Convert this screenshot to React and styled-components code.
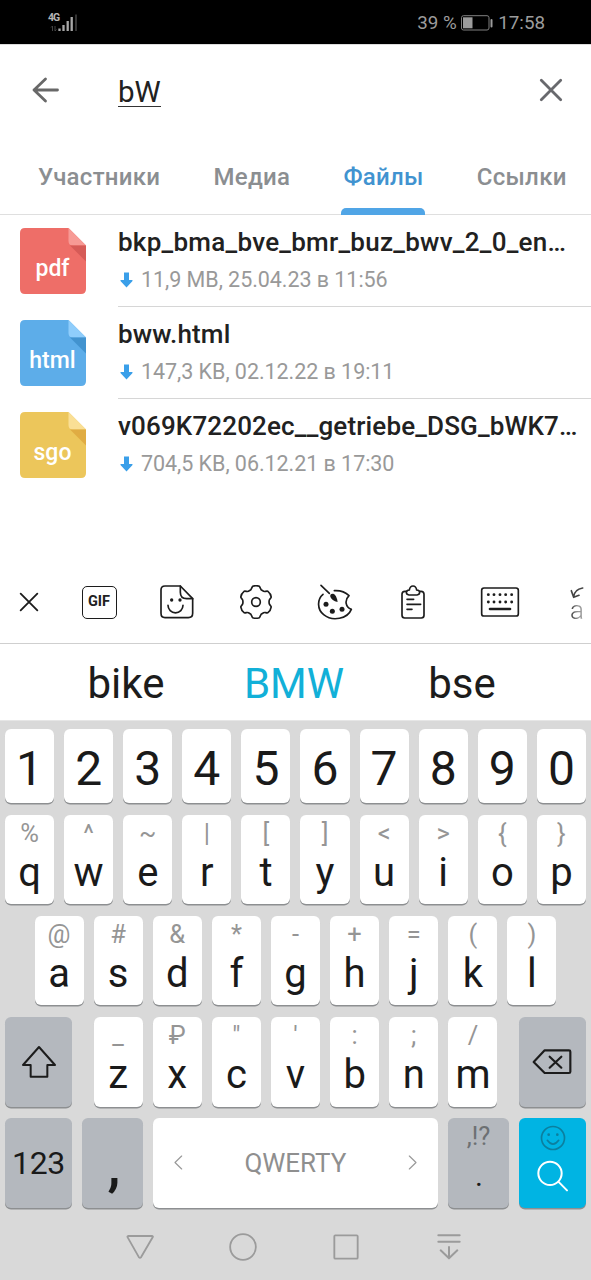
import React from 'react';
import styled, { createGlobalStyle } from 'styled-components';

const GlobalStyle = createGlobalStyle`
  * { box-sizing: border-box; }
  body { margin: 0; background: #fff; }
`;

const Screen = styled.div`
  display: flex;
  flex-direction: column;
  width: 591px;
  height: 1280px;
  overflow: hidden;
  background: #fff;
  font-family: Roboto, 'Noto Sans', sans-serif;
  color: #212121;
`;

const Icon = styled.svg`
  display: block;
  flex: none;
  fill: none;
  stroke: ${(p) => p.$color || '#1c1c1c'};
  stroke-width: ${(p) => p.$weight || 4};
  stroke-linecap: round;
  stroke-linejoin: round;
`;

/* ---------- status bar ---------- */

const StatusBar = styled.div`
  display: flex;
  align-items: center;
  height: 44px;
  flex: none;
  padding: 1px 46px 0 48px;
  background: #000;
  color: #9c9c9c;
  font-size: 18.8px;
  line-height: 22px;
`;

const Signal = styled.div`
  display: flex;
  margin-right: auto;
`;

const Network = styled.div`
  width: 10px;
  font-size: 10.5px;
  font-weight: 700;
  line-height: 8px;
  letter-spacing: -0.9px;
  color: #b5b5b5;
`;

const StatusText = styled.span`
  white-space: nowrap;
`;

const Battery = styled.div`
  margin: 0 5px 0 4.5px;
`;

/* ---------- search header ---------- */

const Header = styled.header`
  display: flex;
  align-items: center;
  flex: none;
  height: 92px;
  padding: 0 28px 1.5px 31.5px;
  border-top: 1px solid #dcdcdc;
`;

const Query = styled.div`
  flex: 1;
  margin-left: 59.5px;
  padding-top: 4px;
`;

const QueryText = styled.span`
  display: inline-block;
  font-size: 29.5px;
  line-height: 28px;
  padding-top: 1px;
  height: 29.5px;
  border-bottom: 1.5px solid #333;
`;

const Tabs = styled.nav`
  display: flex;
  gap: 53.2px;
  flex: none;
  height: 79px;
  padding-left: 38px;
  border-bottom: 1px solid #dfdfdf;
`;

const Tab = styled.div`
  position: relative;
  height: 79px;
  padding-top: 28px;
  font-size: 24px;
  font-weight: 500;
  line-height: 26px;
  letter-spacing: 0.28px;
  white-space: nowrap;
  color: ${(p) => (p.$active ? '#4193d0' : '#8b8e91')};
`;

const Indicator = styled.div`
  position: absolute;
  left: -2px;
  right: -1.5px;
  bottom: 0;
  height: 7px;
  border-radius: 5px 5px 0 0;
  background: #50a5e6;
`;

/* ---------- files ---------- */

const Files = styled.main`
  flex: none;
  height: 347px;
`;

const FileRow = styled.div`
  display: flex;
  height: 92px;
  padding-left: 19.5px;
`;

const Badge = styled.div`
  position: relative;
  width: 66px;
  height: 66px;
  margin: 13px 32.5px 0 0;
  flex: none;
`;

const BadgeLabel = styled.div`
  position: absolute;
  inset: 27px 0 auto 0;
  text-align: center;
  font-size: 23px;
  font-weight: 500;
  line-height: 27px;
  color: #fff;
`;

const FileInfo = styled.div`
  flex: 1;
  border-bottom: ${(p) => (p.$last ? 'none' : '1px solid #d6d6d6')};
`;

const FileName = styled.div`
  padding-top: 13px;
  font-size: 26px;
  font-weight: 500;
  line-height: 29px;
  white-space: nowrap;
  letter-spacing: ${(p) => p.$spacing || 0}px;
`;

const FileMeta = styled.div`
  display: flex;
  align-items: center;
  gap: 8px;
  padding: 10px 0 0 2px;
  font-size: 21.5px;
  line-height: 26px;
  letter-spacing: -0.05px;
  white-space: nowrap;
  color: #999;
`;

/* ---------- keyboard toolbar ---------- */

const Toolbar = styled.div`
  display: grid;
  grid-template-columns: 58px 82px 74px 83px 75px 82px 92px 45px;
  align-items: center;
  justify-items: center;
  flex: none;
  height: 82px;
  padding-bottom: 1px;
  border-bottom: 1px solid #cfcfcf;
`;

const GifBox = styled.div`
  width: 35px;
  height: 33px;
  border: 1.6px solid #1c1c1c;
  border-radius: 5px;
  text-align: center;
  font-size: 14.5px;
  font-weight: 700;
  line-height: 30px;
`;

const Convert = styled.div`
  display: flex;
  flex-direction: column;
  justify-self: start;
  gap: 1px;
  margin-left: 24px;
  padding-top: 2px;
  font-size: 26px;
  font-weight: 300;
  line-height: 20px;
  color: transparent;
  background: linear-gradient(90deg, #444 10%, #999 60%);
  background-clip: text;
`;

const Suggestions = styled.div`
  display: grid;
  grid-template-columns: repeat(3, 168px);
  justify-content: center;
  align-items: center;
  flex: none;
  height: 76px;
  padding: 3px 3px 0 0;
  font-size: 42px;
`;

const Suggestion = styled.div`
  text-align: center;
  color: ${(p) => (p.$primary ? '#12b0d8' : '#1c1c1c')};
`;

/* ---------- keyboard ---------- */

const Keyboard = styled.div`
  display: flex;
  flex-direction: column;
  gap: 11.6px;
  flex: none;
  height: 490px;
  padding-top: 8px;
  background: #d9d9d9;
  border-top: 1px solid #e6e6e6;
`;

const KeyRow = styled.div`
  display: flex;
  gap: 10px;
  flex: none;
  height: ${(p) => p.$height || 89.6}px;
  padding: 0 ${(p) => p.$inset || 5}px;
`;

const keyColors = { light: '#fff', dark: '#b4b8be', accent: '#00b4e3' };

const Key = styled.div`
  display: flex;
  flex-direction: column;
  align-items: center;
  justify-content: ${(p) => (p.$center ? 'center' : 'flex-start')};
  flex: ${(p) => (p.$width ? `0 0 ${p.$width}px` : '1 1 0')};
  min-width: 0;
  margin-left: ${(p) => p.$before || 0}px;
  margin-right: ${(p) => p.$after || 0}px;
  border-radius: 6px;
  background: ${(p) => keyColors[p.$tone || 'light']};
  box-shadow: 0 1.5px 0 #8d8f91;
  color: #1a1a1a;
`;

const Digit = styled.span`
  padding-top: 6px;
  font-size: 48px;
  line-height: 56px;
`;

const Hint = styled.span`
  height: 36px;
  font-size: 25.5px;
  line-height: 37px;
  color: ${(p) => (p.$dark ? '#6d7073' : '#959595')};
`;

const Letter = styled.span`
  font-size: 40px;
  line-height: 43px;
`;

const ModeLabel = styled.span`
  font-size: 32px;
  line-height: 36px;
  letter-spacing: -0.4px;
`;

const Comma = styled.span`
  font-size: 58px;
  font-weight: 500;
  line-height: 84px;
  padding-top: 5px;
  padding-left: 3px;
`;

const Period = styled.span`
  padding-left: 1px;
  font-size: 30px;
  line-height: 43px;
`;

const SpaceContent = styled.div`
  display: flex;
  align-items: center;
  justify-content: space-between;
  width: 100%;
  padding: 0 21px;
  font-size: 26px;
  color: #8f8f8f;
`;

const SearchIcons = styled.div`
  display: flex;
  flex-direction: column;
  align-items: center;
  gap: 9px;
  padding-top: 7px;
`;

const NavBar = styled.div`
  display: grid;
  grid-template-columns: repeat(4, 103px);
  align-items: center;
  justify-items: center;
  flex: none;
  height: 70px;
  padding: 4px 0 0 88px;
  background: #d9d9d9;
`;

const files = [
  { ext: 'pdf', name: 'bkp_bma_bve_bmr_buz_bwv_2_0_en…', spacing: 0.26, meta: '11,9 MB, 25.04.23 в 11:56', color: '#ee6e68', fold: '#f79a95', shade: '#d65b57' },
  { ext: 'html', name: 'bww.html', spacing: 0.15, meta: '147,3 KB, 02.12.22 в 19:11', color: '#5dade9', fold: '#8fcdfb', shade: '#4293cf' },
  { ext: 'sgo', name: 'v069K72202ec__getriebe_DSG_bWK7…', spacing: 0.15, meta: '704,5 KB, 06.12.21 в 17:30', color: '#ecc65b', fold: '#fadf95', shade: '#e0ac43' },
];

const digits = [...'1234567890'];
const topRow = [['%', 'q'], ['^', 'w'], ['~', 'e'], ['|', 'r'], ['[', 't'], [']', 'y'], ['<', 'u'], ['>', 'i'], ['{', 'o'], ['}', 'p']];
const homeRow = [['@', 'a'], ['#', 's'], ['&', 'd'], ['*', 'f'], ['-', 'g'], ['+', 'h'], ['=', 'j'], ['(', 'k'], [')', 'l']];
const bottomRow = [['_', 'z'], ['₽', 'x'], ['"', 'c'], ["'", 'v'], [':', 'b'], [';', 'n'], ['/', 'm']];

function gearPath() {
  const pt = (r, deg) => {
    const a = (deg * Math.PI) / 180;
    return `${(r * Math.cos(a)).toFixed(1)} ${(r * Math.sin(a)).toFixed(1)}`;
  };
  let d = `M${pt(48, -102)}`;
  for (let i = 0; i < 6; i += 1) {
    const a = -90 + i * 60;
    d += `Q${pt(51, a)} ${pt(48, a + 12)}`;
    d += `C${pt(45, a + 19)} ${pt(38, a + 18)} ${pt(39.5, a + 30)}`;
    d += `C${pt(38, a + 42)} ${pt(45, a + 41)} ${pt(48, a + 48)}`;
  }
  return `${d}Z`;
}

function LetterKey({ pair }) {
  return (
    <Key>
      <Hint>{pair[0]}</Hint>
      <Letter>{pair[1]}</Letter>
    </Key>
  );
}

function FileItem({ file, last }) {
  return (
    <FileRow>
      <Badge>
        <svg width="66" height="66" viewBox="0 0 66 66">
          <path d="M5 0H48.500L66 17.500V61Q66 66 61 66H5Q0 66 0 61V5Q0 0 5 0Z" fill={file.color} />
          <path d="M48.500 0L66 17.500H53Q48.500 17.500 48.500 13Z" fill={file.fold} />
          <path d="M50 17.500H66V33.500Z" fill={file.shade} />
        </svg>
        <BadgeLabel>{file.ext}</BadgeLabel>
      </Badge>
      <FileInfo $last={last}>
        <FileName $spacing={file.spacing}>{file.name}</FileName>
        <FileMeta>
          <svg width="13" height="16" viewBox="0 0 13 16">
            <path d="M4 0.500H9V8H12.200Q13 8.500 12.300 9.300L6.500 15.500L0.700 9.300Q0 8.500 0.800 8H4Z" fill="#3a9fe9" />
          </svg>
          {file.meta}
        </FileMeta>
      </FileInfo>
    </FileRow>
  );
}

export default function App() {
  return (
    <Screen>
      <GlobalStyle />
      <StatusBar>
        <Signal>
          <Network>4G</Network>
          <svg width="28" height="18" viewBox="0 0 28 18" style={{ marginLeft: -9 }}>
            <path d="M3.500 17V12M2 13.500L3.500 12M6 12V17L7.500 15.500" fill="none" stroke="#444" strokeWidth="1" />
            <path d="M10.500 14.500V17M14.500 11V17M18.700 7V17M22.700 3V17" stroke="#a8a8a8" strokeWidth="2.300" />
            <path d="M27 0.500V17" stroke="#333" strokeWidth="2" />
          </svg>
        </Signal>
        <StatusText>39 %</StatusText>
        <Battery>
          <svg width="32" height="16" viewBox="0 0 32 16" style={{ display: 'block' }}>
            <rect x="0.500" y="0.700" width="27.500" height="14.300" rx="2" fill="none" stroke="#808080" strokeWidth="1" />
            <rect x="2" y="2.300" width="9.500" height="11" fill="#9c9c9c" />
            <rect x="29.500" y="4" width="2" height="8.500" rx="1" fill="#9c9c9c" />
          </svg>
        </Battery>
        <StatusText>17:58</StatusText>
      </StatusBar>

      <Header>
        <Icon width="27" height="26" viewBox="0 0 27 26" $color="#686868" $weight={2.8}>
          <path d="M25.500 13H2M13.500 2L2 13L13.500 24" />
        </Icon>
        <Query>
          <QueryText>bW</QueryText>
        </Query>
        <Icon width="24" height="24" viewBox="0 0 24 24" $color="#68696d" $weight={2.8}>
          <path d="M2.300 2.300L21.700 21.700M21.700 2.300L2.300 21.700" />
        </Icon>
      </Header>

      <Tabs>
        <Tab>Участники</Tab>
        <Tab>Медиа</Tab>
        <Tab $active>
          Файлы
          <Indicator />
        </Tab>
        <Tab>Ссылки</Tab>
      </Tabs>

      <Files>
        {files.map((f, i) => (
          <FileItem key={f.ext} file={f} last={i === files.length - 1} />
        ))}
      </Files>

      <Toolbar>
        <Icon width="20" height="20" viewBox="0 0 60 60" $weight={5.5}>
          <path d="M5 5L55 55M55 5L5 55" />
        </Icon>
        <GifBox>GIF</GifBox>
        <Icon width="34" height="34" viewBox="482 46 102 102" $weight={5}>
          <path d="M497 49H543L580 87V131Q580 144 567 144H497Q485 144 485 131V61Q485 49 497 49Z" />
          <path d="M543 49V68Q543 87 562 87H580" />
          <path d="M506 107A22.500 22.500 0 0 0 551 107" />
          <g fill="#1c1c1c" stroke="none">
            <circle cx="517" cy="91" r="5" />
            <circle cx="542" cy="91" r="5" />
          </g>
        </Icon>
        <Icon width="34" height="34" viewBox="-51 -51 102 102" $weight={5}>
          <path d={gearPath()} />
          <circle r="13" />
        </Icon>
        <Icon width="36" height="36" viewBox="78 42 108 108" $weight={5}>
          <path d="M96 73C78 88 78 118 98 134C125 156 170 146 181 118C163 111 160 91 174 77C162 65 147 61 130 62" />
          <path d="M90 46L115 70" />
          <g fill="#1c1c1c" stroke="none">
            <path d="M118 80Q116 70 127 71Q137 75 140 96Q122 92 118 80Z" />
            <circle cx="105" cy="103" r="7.500" />
            <circle cx="124" cy="124" r="7.500" />
            <circle cx="153" cy="118" r="7.500" />
          </g>
        </Icon>
        <Icon width="26" height="36" viewBox="329 43 78 108" $weight={5}>
          <path d="M349 65H344Q335 65 335 74V137Q335 145 343 145H393Q401 145 401 137V74Q401 65 392 65H388" />
          <path d="M356 76Q348 75 348 68Q348 62 357 61Q359 49 368 49Q377 49 379 61Q388 62 388 68Q388 75 380 76Z" />
          <path d="M350 89H370M350 104H391M350 119H365" />
        </Icon>
        <Icon width="40" height="32" viewBox="569 49 120 96" $weight={5}>
          <rect x="574" y="55" width="110" height="84" rx="7" />
          <path d="M599 118H659" strokeWidth="8" />
          <g fill="#1c1c1c" stroke="none">
            {[594, 611, 629, 646, 664].map((x) => (
              <g key={x}>
                <circle cx={x} cy="75" r="4.300" />
                <circle cx={x} cy="97" r="4.300" />
              </g>
            ))}
          </g>
        </Icon>
        <Convert>
          <Icon width="14" height="12" viewBox="837 50 42 36" $color="#444" $weight={5}>
            <path d="M875 53Q850 57 848 80M841 61L848 81L864 75" />
          </Icon>
          a
        </Convert>
      </Toolbar>

      <Suggestions>
        <Suggestion>bike</Suggestion>
        <Suggestion $primary>BMW</Suggestion>
        <Suggestion>bse</Suggestion>
      </Suggestions>

      <Keyboard>
        <KeyRow $height={74}>
          {digits.map((d) => (
            <Key key={d} $center>
              <Digit>{d}</Digit>
            </Key>
          ))}
        </KeyRow>
        <KeyRow>
          {topRow.map((p) => <LetterKey key={p[1]} pair={p} />)}
        </KeyRow>
        <KeyRow $inset={34.5}>
          {homeRow.map((p) => <LetterKey key={p[1]} pair={p} />)}
        </KeyRow>
        <KeyRow>
          <Key $tone="dark" $width={67} $after={11.5} $center>
            <Icon width="36" height="34" viewBox="63 119 108 102" $weight={6}>
              <path d="M117 125L165 179H142V214H92V179H69Z" />
            </Icon>
          </Key>
          {bottomRow.map((p) => <LetterKey key={p[1]} pair={p} />)}
          <Key $tone="dark" $width={67} $before={11.5} $center>
            <Icon width="40" height="26" viewBox="727 130 120 78" $weight={6.5}>
              <path d="M732 169L765 134H838Q842 134 842 138V198Q842 202 838 202H765Z" />
              <path d="M780 153L815 186M815 153L780 186" />
            </Icon>
          </Key>
        </KeyRow>
        <KeyRow>
          <Key $tone="dark" $width={67} $center>
            <ModeLabel>123</ModeLabel>
          </Key>
          <Key $tone="dark" $width={61}>
            <Comma>,</Comma>
          </Key>
          <Key $center>
            <SpaceContent>
              <Icon width="9" height="15" viewBox="0 0 27 45" $color="#999" $weight={3.5}>
                <path d="M23 3L3 22.500L23 42" />
              </Icon>
              QWERTY
              <Icon width="9" height="15" viewBox="0 0 27 45" $color="#999" $weight={3.5}>
                <path d="M4 3L24 22.500L4 42" />
              </Icon>
            </SpaceContent>
          </Key>
          <Key $tone="dark" $width={61}>
            <Hint $dark>,!?</Hint>
            <Period>.</Period>
          </Key>
          <Key $tone="accent" $width={67}>
            <SearchIcons>
              <Icon width="26" height="26" viewBox="747 360 78 78" $color="#0b7f9f" $weight={5}>
                <circle cx="786" cy="399" r="34.500" />
                <path d="M769 406Q786 429 803 406" />
                <g fill="#0b7f9f" stroke="none">
                  <circle cx="773" cy="389" r="4" />
                  <circle cx="799" cy="389" r="4" />
                </g>
              </Icon>
              <Icon width="32" height="32" viewBox="737 464 96 96" $color="#fff" $weight={6}>
                <circle cx="776" cy="504" r="35" />
                <path d="M801 529L827 555" />
              </Icon>
            </SearchIcons>
          </Key>
        </KeyRow>
      </Keyboard>

      <NavBar>
        <Icon width="28" height="26" viewBox="378 688 84 78" $color="#9b9b9b" $weight={5.5}>
          <path d="M385 694H456Q460 695 458 698L423 758Q420 761 417 758L383 698Q381 695 385 694Z" />
        </Icon>
        <Icon width="28" height="28" viewBox="-42 -42 84 84" $color="#9b9b9b" $weight={5.5}>
          <circle r="38.500" />
        </Icon>
        <Icon width="26" height="26" viewBox="125 688 78 78" $color="#9b9b9b" $weight={5.5}>
          <rect x="129" y="692" width="70" height="70" rx="3" />
        </Icon>
        <Icon width="24" height="26" viewBox="438 688 72 78" $color="#9b9b9b" $weight={6}>
          <path d="M442 692H506M442 711H506M474 727V760M449 737L474 761L499 737" />
        </Icon>
      </NavBar>
    </Screen>
  );
}
